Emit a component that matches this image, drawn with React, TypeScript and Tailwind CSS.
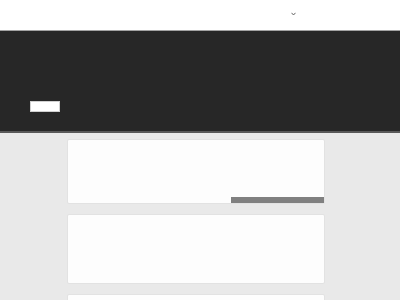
export default function App() {
  return (
    <div className="w-[400px] h-[300px] overflow-hidden bg-[#e9e9e9] font-['Liberation_Sans',sans-serif]">
      <header className="h-[31px] bg-white border-b border-[#a3a3a3] flex pl-[291px] pt-[12px]">
        <svg width="5" height="4" viewBox="0 0 5 4" className="text-[#555]">
          <path d="M0.5 0.8 L2.5 3 L4.5 0.8" fill="none" stroke="currentColor" strokeWidth="0.9" />
        </svg>
      </header>
      <section className="h-[102px] bg-[#272727] border-b-2 border-[#595959] pt-[70px] pl-[30px]">
        <button className="block w-[30px] h-[11px] bg-white border border-[#d0d0d0]" />
      </section>
      <main className="pt-[6px] pl-[67px] flex flex-col gap-[10px]">
        <div className="w-[258px] h-[65px] bg-[#fdfdfd] border border-[#e2e2e2] rounded-[2px] flex flex-col justify-end items-end">
          <div className="w-[93px] h-[6px] bg-[#808080]" />
        </div>
        <div className="w-[258px] h-[70px] bg-[#fdfdfd] border border-[#e2e2e2] rounded-[2px]" />
        <div className="w-[258px] h-[70px] bg-[#fdfdfd] border border-[#e2e2e2] rounded-[2px]" />
      </main>
    </div>
  );
}
